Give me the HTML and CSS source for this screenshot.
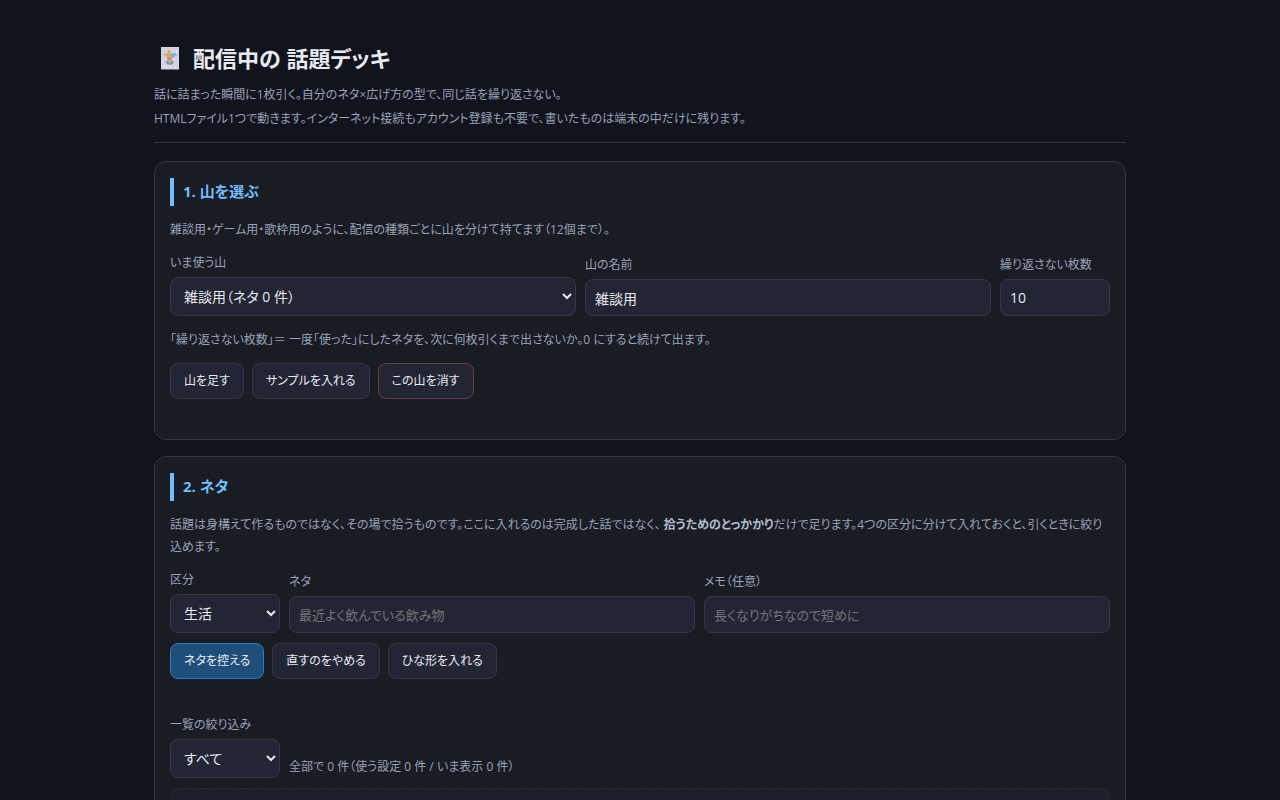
FILE: index.html
```
<!DOCTYPE html>
<html lang="ja">
<head>
    <meta charset="UTF-8">
    <meta name="viewport" content="width=device-width, initial-scale=1.0">
    <title>配信中の 話題デッキ</title>
    <link rel="stylesheet" href="styles.css">
</head>
<body>
    <div class="wrap">
        <header>
            <h1>
                <svg class="joker" viewBox="0 0 18 23" aria-hidden="true">
                    <rect width="18" height="23" fill="#d5d3df"/>
                    <rect y="22" width="18" height="1" fill="#87658f"/>
                    <path d="M2 9l1-3 3 1 1-4h2l1 5 1 2H6L4 8z" fill="#d9a863"/>
                    <path d="M9 9l2-3 3 0 2 3-2 0-2 2z" fill="#73b5e5"/>
                    <path d="M6 10h5v4l-2 2-3-2z" fill="#d9a070"/>
                    <path d="M4 14l2 0 3 2 2-2 2 0-1 3-3 1-3-1z" fill="#7998b2"/>
                    <path d="M7 11h1v1H7zM9 11h1v1H9z" fill="#8a6a66"/>
                    <path d="M2 19h1v1H2zM5 20h1v1H5zM9 19h1v1H9zM14 20h1v1h-1zM15 4h1v1h-1z" fill="#fff"/>
                </svg>
                配信中の 話題デッキ
            </h1>
            <p class="lead">話に詰まった瞬間に1枚引く。自分のネタ×広げ方の型で、同じ話を繰り返さない。<br>
            HTMLファイル1つで動きます。インターネット接続もアカウント登録も不要で、書いたものは端末の中だけに残ります。</p>
        </header>

        <section class="card">
            <h2>1. 山を選ぶ</h2>
            <p class="note">雑談用・ゲーム用・歌枠用のように、配信の種類ごとに山を分けて持てます（12個まで）。</p>
            <div class="row">
                <div class="field">
                    <label for="deckSelect">いま使う山</label>
                    <select id="deckSelect">
                        <option>雑談用（ネタ 0 件）</option>
                    </select>
                </div>
                <div class="field">
                    <label for="deckName">山の名前</label>
                    <input type="text" id="deckName" value="雑談用">
                </div>
                <div class="field small">
                    <label for="deckGap">繰り返さない枚数</label>
                    <input type="text" inputmode="numeric" id="deckGap" value="10">
                </div>
            </div>
            <p class="note">「繰り返さない枚数」＝ 一度「使った」にしたネタを、次に何枚引くまで出さないか。0 にすると続けて出ます。</p>
            <div class="buttons">
                <button type="button">山を足す</button>
                <button type="button">サンプルを入れる</button>
                <button type="button" class="danger">この山を消す</button>
            </div>
            <div class="message"></div>
        </section>

        <section class="card">
            <h2>2. ネタ</h2>
            <p class="note">話題は身構えて作るものではなく、その場で拾うものです。ここに入れるのは完成した話ではなく、 <b>拾うためのとっかかり</b>だけで足ります。4つの区分に分けて入れておくと、引くときに絞り込めます。</p>
            <div class="row">
                <div class="field small">
                    <label for="kind">区分</label>
                    <select id="kind">
                        <option>生活</option>
                    </select>
                </div>
                <div class="field">
                    <label for="topic">ネタ</label>
                    <input type="text" id="topic" placeholder="最近よく飲んでいる飲み物">
                </div>
                <div class="field">
                    <label for="memo">メモ（任意）</label>
                    <input type="text" id="memo" placeholder="長くなりがちなので短めに">
                </div>
            </div>
            <div class="buttons">
                <button type="button" class="primary">ネタを控える</button>
                <button type="button">直すのをやめる</button>
                <button type="button">ひな形を入れる</button>
            </div>
            <div class="message"></div>
            <div class="row filter">
                <div class="field small">
                    <label for="filter">一覧の絞り込み</label>
                    <select id="filter">
                        <option>すべて</option>
                    </select>
                </div>
                <p class="count">全部で 0 件（使う設定 0 件 / いま表示 0 件）</p>
            </div>
            <div class="list"></div>
        </section>
    </div>
</body>
</html>
```

FILE: styles.css
```
* {
    box-sizing: border-box;
}
body {
    margin: 0;
    background: #11141c;
    color: #e8eaf2;
    font-family: "Open Sans", "Noto Sans CJK JP", sans-serif;
    font-size: 14px;
    line-height: 24px;
    /* proportional kana */
    font-feature-settings: "palt";
}
.wrap {
    max-width: 1000px;
    margin: 0 auto;
    padding: 40px 14px;
}
header {
    border-bottom: 1px solid #333849;
    padding-bottom: 11px;
    margin-bottom: 18px;
}
h1 {
    display: flex;
    align-items: center;
    gap: 14px;
    margin: 0 0 7px;
    padding-left: 7px;
    font-size: 22px;
    line-height: 36px;
}
.joker {
    width: 18px;
    height: 23px;
}
p {
    margin: 0;
}
.lead {
    color: #98a2b8;
    font-size: 12px;
}
.card {
    background: #1a1c24;
    border: 1px solid #333849;
    border-radius: 12px;
    padding: 16px 15px 15px;
    margin-bottom: 16px;
}
h2 {
    margin: 0 0 13px;
    padding: 0 0 2px 9px;
    border-left: 4px solid #74bdfb;
    color: #74bdfb;
    font-size: 15px;
    line-height: 26px;
}
.note, .count, label {
    color: #98a2b8;
    font-size: 12px;
    line-height: 22px;
}
.note b {
    color: #b3bccd;
}
.row {
    display: flex;
    align-items: flex-end;
    gap: 9px;
    margin: 11px 0 13px;
}
.field {
    flex: 1;
    min-width: 0;
}
.field.small {
    flex: 0 0 110px;
}
label {
    display: block;
    margin-bottom: 3px;
    white-space: nowrap;
}
input, select, button {
    background: #222533;
    color: #e8eaf2;
    border: 1px solid #333849;
    border-radius: 8px;
    font: inherit;
    line-height: 20px;
    font-feature-settings: "palt";
}
input {
    display: block;
    width: 100%;
    height: 37px;
    padding: 0 9px;
}
input::placeholder {
    color: #757575;
    font-size: 13px;
}
select {
    display: block;
    width: 100%;
    height: 39px;
    padding: 0 9px;
}
.buttons {
    display: flex;
    flex-wrap: wrap;
    gap: 8px;
    margin-top: 12px;
}
.row + .buttons {
    margin-top: -3px;
}
button {
    height: 36px;
    padding: 0 13px;
    font-size: 12px;
    cursor: pointer;
}
button.primary {
    background: #1f4f78;
    border-color: #2b7bc0;
}
button.danger {
    border-color: #713c40;
}
.message {
    min-height: 25px;
}
.row.filter {
    margin: 10px 0;
}
.list {
    min-height: 60px;
    background: #1d202a;
    border: 1px dashed #282d3a;
    border-radius: 10px;
}
```
